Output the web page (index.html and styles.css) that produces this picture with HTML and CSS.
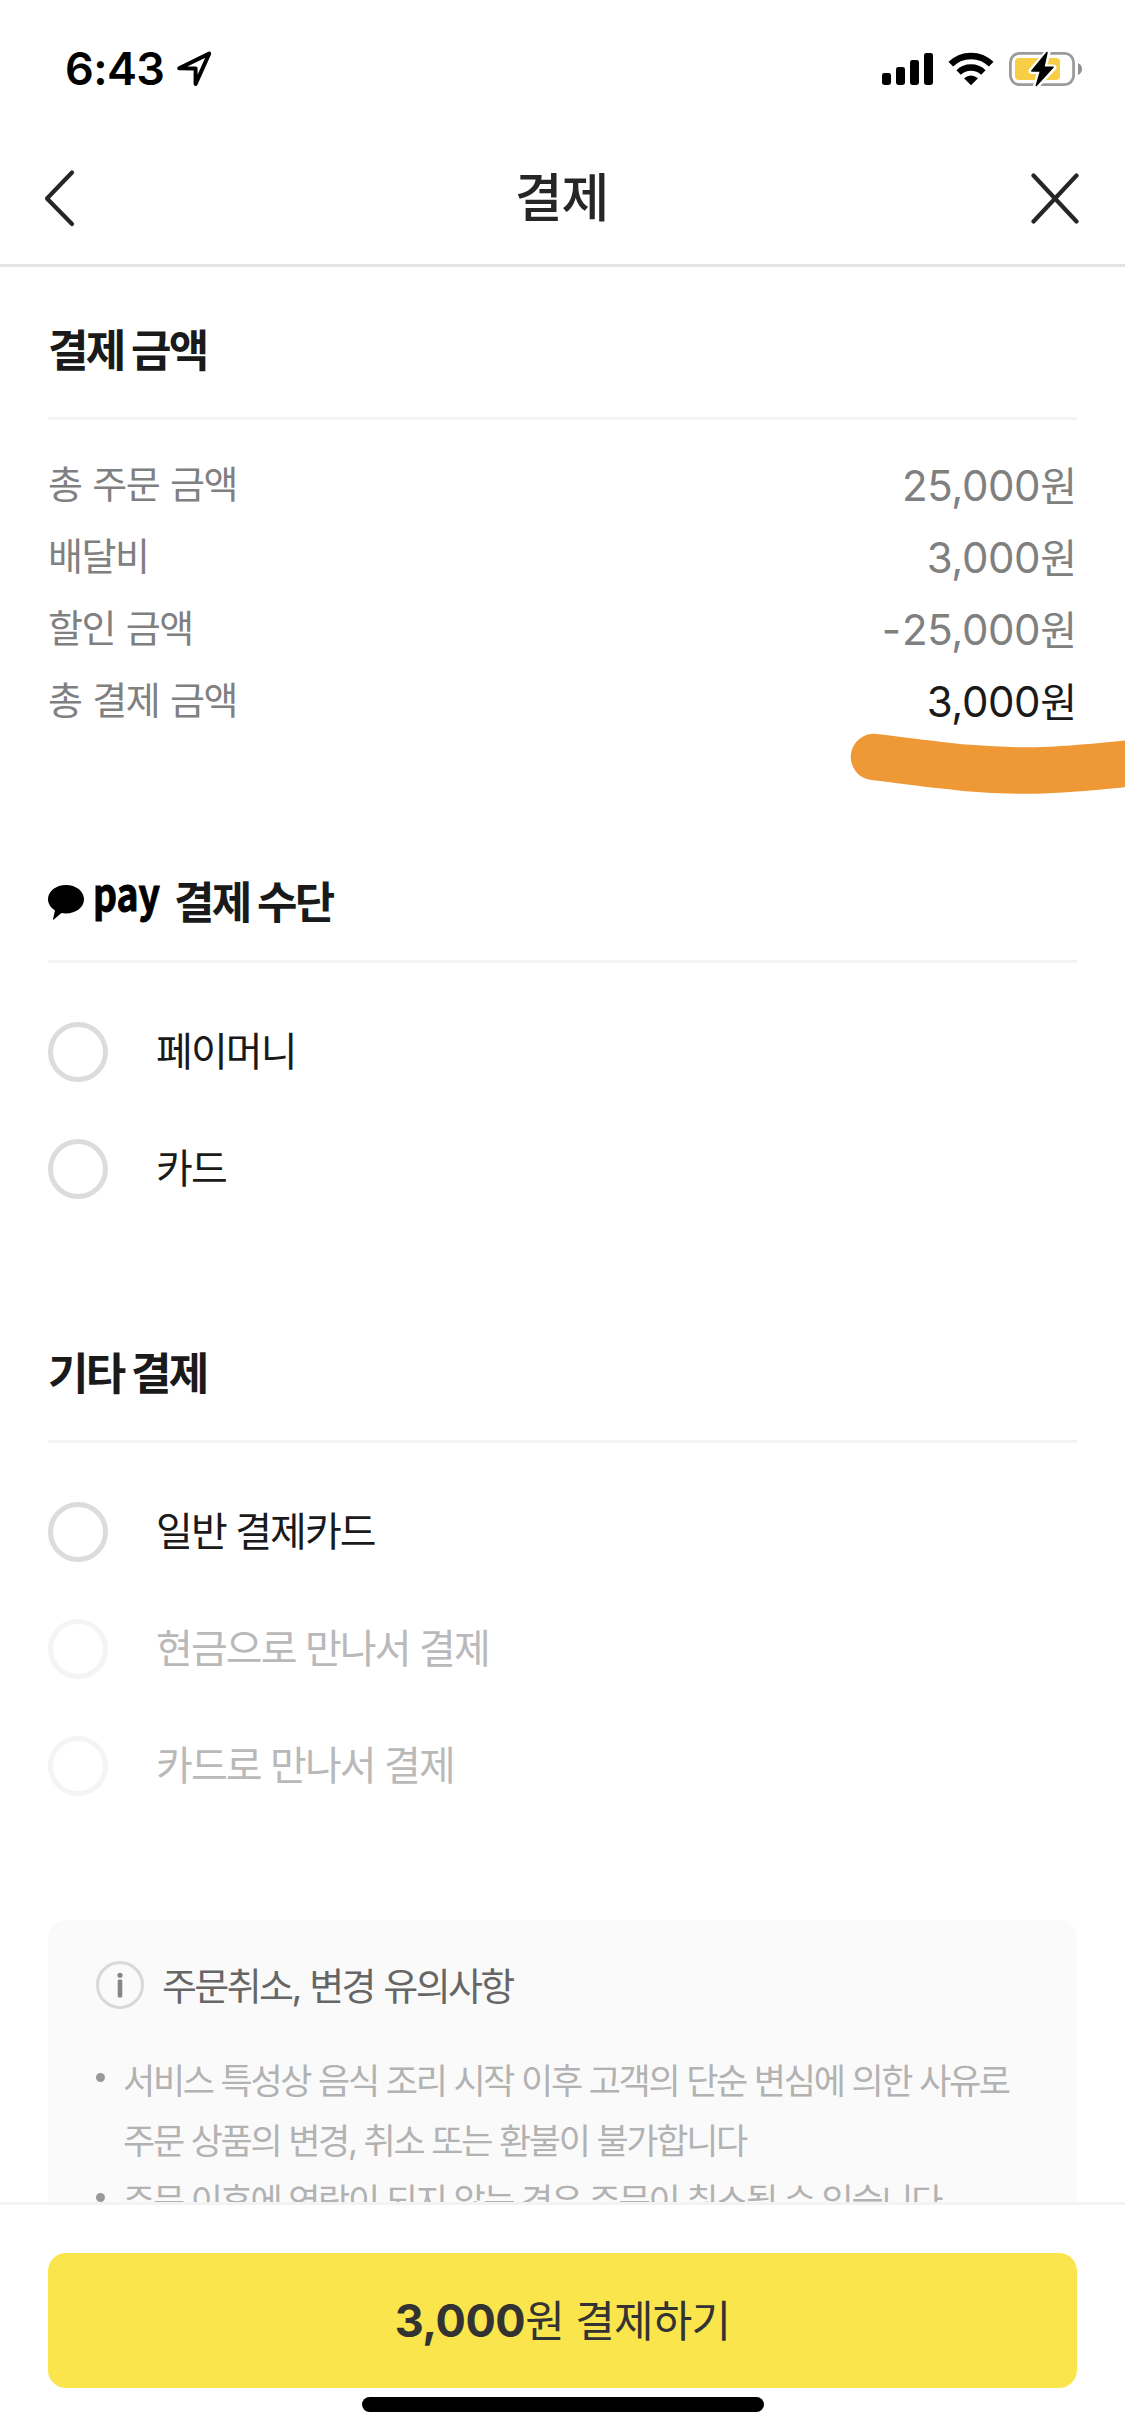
FILE: index.html
```html
<!DOCTYPE html>
<html lang="ko">
<head>
<meta charset="utf-8">
<title>결제</title>
<link rel="stylesheet" href="styles.css">
</head>
<body>
<div class="screen">
  <div class="status">
    <div class="status-left">
      <span class="time">6:43</span>
      <svg class="location" width="38" height="38" viewBox="0 0 38 38"><path d="M3.2 18.2 33.2 3.6 19.6 34V18.4z" fill="none" stroke="#000" stroke-width="4" stroke-linejoin="round"/></svg>
    </div>
    <div class="status-right">
      <svg width="51" height="36" viewBox="0 0 51 36"><rect x="0" y="22" width="9" height="12" rx="2.4"/><rect x="14" y="16" width="9" height="18" rx="2.4"/><rect x="28" y="9" width="9" height="25" rx="2.4"/><rect x="42" y="2" width="9" height="32" rx="2.4"/></svg>
      <svg width="46" height="36" viewBox="0 0 46 36"><path d="M2.8 13.2a28.8 28.8 0 0 1 40.4 0" fill="none" stroke="#000" stroke-width="6.6"/><path d="M10.6 21.5a17.8 17.8 0 0 1 24.8 0" fill="none" stroke="#000" stroke-width="6.4"/><path d="M16 27.2Q23 21.8 30 27.2L23 34.2z"/></svg>
      <svg width="74" height="38" viewBox="0 0 74 38"><rect x="1.4" y="3.4" width="63.2" height="31.2" rx="9" fill="none" stroke="#9b9b9b" stroke-width="2.8"/><path d="M69 13q4 2 4 6t-4 6z" fill="#8f8f8f"/><rect x="6" y="8" width="45" height="22" rx="4" fill="#f7ce46"/><path d="M38.5 2.5 22.5 21h9L27 36.2 44.5 17.5h-9.700z" fill="#fff" stroke="#fff" stroke-width="6" stroke-linejoin="round"/><path d="M38 2.500 22.800 21h8.800L27.300 35.500 44 17.200h-9.200z" stroke="#000" stroke-width="1.500" stroke-linejoin="round"/></svg>
    </div>
  </div>

  <header class="nav">
    <svg width="52" height="60" viewBox="0 0 52 60"><path d="M29 4.500 4 30.500 29 56" fill="none" stroke="#262626" stroke-width="4.200" stroke-linecap="round" stroke-linejoin="round"/></svg>
    <h1 class="nav-title">결제</h1>
    <svg width="52" height="52" viewBox="0 0 52 52"><path d="M3.500 3.500 46.500 49.500M46.500 3.500 3.500 49.500" fill="none" stroke="#262626" stroke-width="4.200" stroke-linecap="round"/></svg>
  </header>

  <main class="content">
    <section class="amounts">
      <h2 class="heading">결제 금액</h2>
      <dl class="amount-list">
        <div class="amount"><dt>총 주문 금액</dt><dd>25,000<span class="won">원</span></dd></div>
        <div class="amount"><dt>배달비</dt><dd>3,000<span class="won">원</span></dd></div>
        <div class="amount"><dt>할인 금액</dt><dd><span class="minus">-</span>25,000<span class="won">원</span></dd></div>
        <div class="amount total"><dt>총 결제 금액</dt><dd>3,000<span class="won">원</span></dd></div>
      </dl>
      <svg class="marker" width="280" height="70" viewBox="0 0 280 70"><path d="M29 31C96 39 127 44.500 183 44.500 223 44.500 252 40 300 36" fill="none" stroke="#ef9836" stroke-width="46.500" stroke-linecap="round"/></svg>
    </section>

    <section class="methods">
      <h2 class="heading pay-heading">
        <svg class="pay-logo" width="114" height="48" viewBox="0 0 114 48"><path d="M18 4c10 0 18 6.200 18 14.300S28 32.500 18 32.500q-2.500 0-4.500-.4L5.800 38.500q-1 .5-.8-.6L7 29.400C2.800 26.800 0 22.900 0 18.300 0 10.200 8 4 18 4z"/><text class="pay-word" x="45" y="29.500" textLength="67" lengthAdjust="spacingAndGlyphs">pay</text></svg>
        <span>결제 수단</span>
      </h2>
      <ul class="options">
        <li class="option"><span class="radio"></span><span class="option-name">페이머니</span></li>
        <li class="option"><span class="radio"></span><span class="option-name">카드</span></li>
      </ul>
    </section>

    <section class="others">
      <h2 class="heading">기타 결제</h2>
      <ul class="options">
        <li class="option"><span class="radio"></span><span class="option-name">일반 결제카드</span></li>
        <li class="option disabled"><span class="radio"></span><span class="option-name">현금으로 만나서 결제</span></li>
        <li class="option disabled"><span class="radio"></span><span class="option-name">카드로 만나서 결제</span></li>
      </ul>
    </section>

    <section class="notice">
      <h3 class="notice-title">
        <svg width="48" height="48" viewBox="0 0 48 48"><circle cx="24" cy="24" r="22.500" fill="none" stroke="#d8d8d8" stroke-width="3"/><circle cx="24" cy="14.300" r="2.600" fill="#868686"/><rect x="21.700" y="18.500" width="4.600" height="18" rx="1.500" fill="#868686"/></svg>
        <span>주문취소, 변경 유의사항</span>
      </h3>
      <ul class="notice-list">
        <li>서비스 특성상 음식 조리 시작 이후 고객의 단순 변심에 의한 사유로<br>주문 상품의 변경, 취소 또는 환불이 불가합니다</li>
        <li>주문 이후에 연락이 되지 않는 경우 주문이 취소될 수 있습니다</li>
      </ul>
    </section>
  </main>

  <footer class="footer">
    <button class="pay-button" type="button"><b>3,000</b><span>원 결제하기</span></button>
    <div class="home-bar"></div>
  </footer>
</div>
</body>
</html>
```
FILE: styles.css
```css
* { box-sizing: border-box; }

body {
  margin: 0;
  background: #fff;
  color: #1a1a1a;
  font-family: Inter, "Noto Sans CJK KR", sans-serif;
}

h1, h2, h3, ul, dl, dd { margin: 0; padding: 0; }
ul { list-style: none; }
svg { display: block; flex: none; }

.screen {
  display: flex;
  flex-direction: column;
  width: 1125px;
  height: 2436px;
  overflow: hidden;
}

/* status bar */
.status {
  display: flex;
  flex: none;
  justify-content: space-between;
  align-items: center;
  height: 132px;
  padding: 6px 42px 0 65px;
}
.status-left, .status-right { display: flex; align-items: center; }
.status-left { gap: 12px; }
.status-right { gap: 15px; }
.time { font-size: 45px; font-weight: 600; line-height: 54px; letter-spacing: -0.6px; color: #000; }

/* navigation */
.nav {
  display: flex;
  flex: none;
  justify-content: space-between;
  align-items: center;
  height: 135px;
  padding: 0 43px 0 43px;
  border-bottom: 3px solid #e3e3e3;
}
.nav-title { padding: 1px 2px 0 0; font-size: 52px; font-weight: 500; line-height: 60px; letter-spacing: -1px; color: #262626; }

/* scrolling content */
.content { flex: 1; min-height: 0; overflow: hidden; padding: 0 48px; }

.heading {
  height: 153px;
  padding-top: 54px;
  border-bottom: 3px solid #f4f4f4;
  font-size: 44px;
  font-weight: 700;
  line-height: 60px;
  letter-spacing: -2.8px;
}

.amounts { position: relative; height: 543px; }
.amount-list { padding-top: 28px; }
.amount { display: flex; justify-content: space-between; height: 72px; color: #808080; }
.amount dt { font-size: 38px; line-height: 72px; letter-spacing: -1.4px; word-spacing: 1.4px; }
.amount dd { padding-right: 1.5px; font-size: 42px; line-height: 76px; letter-spacing: -0.4px; }
.amount .won { font-size: 40px; letter-spacing: -1.5px; }
.minus { letter-spacing: 1px; }
.total dd { color: #1a1a1a; }
.marker { position: absolute; left: 797px; top: 459px; }

.pay-heading { display: flex; align-items: flex-start; gap: 12px; padding-top: 63px; }
.pay-logo { margin-top: 8px; overflow: visible; }
.pay-word { font: 700 45px "Noto Sans CJK KR", sans-serif; letter-spacing: 0; stroke: #000; stroke-width: 1px; }
.methods { height: 480px; }
.others { height: 630px; }

.options { display: flex; flex-direction: column; gap: 57px; padding-top: 59px; }
.option { display: flex; align-items: center; gap: 48px; height: 60px; font-size: 40px; letter-spacing: -1.9px; }
.option-name { padding-bottom: 6px; }
.radio { width: 60px; height: 60px; border: 5px solid #dcdcdc; border-radius: 50%; }
.disabled { color: #b9b9b9; }
.disabled .radio { border-color: #f4f4f4; }

.notice { height: 400px; padding: 41px 48px; border-radius: 18px; background: #fafafa; }
.notice-title {
  display: flex;
  align-items: center;
  gap: 18px;
  height: 48px;
  font-size: 38px;
  font-weight: 400;
  letter-spacing: -2.6px;
  word-spacing: 1.3px;
  color: #666;
}
.notice-title span { padding-bottom: 4px; }
.notice-list { padding-top: 42px; font-size: 35px; line-height: 60px; letter-spacing: -2.3px; word-spacing: 0.3px; color: #b2b2b2; }
.notice-list li { display: grid; grid-template-columns: 27px 1fr; white-space: nowrap; }
.notice-list li::before { content: ""; width: 9px; height: 9px; margin-top: 22px; border-radius: 50%; background: #999; }

/* payment bar */
.footer { flex: none; height: 234px; padding: 48px 48px 0; border-top: 3px solid #f3f3f3; background: #fff; }
.pay-button {
  display: flex;
  justify-content: center;
  align-items: center;
  width: 100%;
  height: 135px;
  padding: 0;
  border: 0;
  border-radius: 18px;
  background: #fae54c;
  color: #333;
  font: 400 43px/60px Inter, "Noto Sans CJK KR", sans-serif;
  letter-spacing: -0.8px;
}
.pay-button b { font-size: 45px; font-weight: 700; letter-spacing: -0.5px; }
.home-bar { width: 402px; height: 15px; margin: 9px auto 0; border-radius: 8px; background: #000; }
```
